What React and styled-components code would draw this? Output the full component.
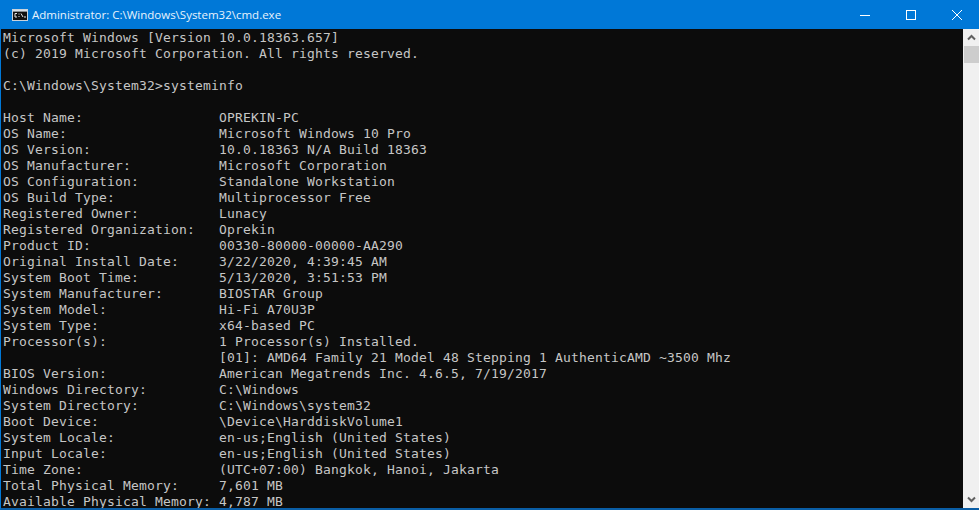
import React from "react";
import styled, { createGlobalStyle } from "styled-components";

const GlobalStyle = createGlobalStyle`
  html, body {
    margin: 0;
    padding: 0;
    height: 100%;
    overflow: hidden;
    background: #0c0c0c;
  }
`;

const Window = styled.div`
  width: 979px;
  height: 510px;
  box-sizing: border-box;
  display: flex;
  flex-direction: column;
  overflow: hidden;
  border-left: 1px solid #0078d7;
  border-bottom: 2px solid #0a5ea6;
  background: #0c0c0c;
`;

const TitleBar = styled.div`
  flex: none;
  height: 29px;
  margin-right: -1px;
  display: flex;
  align-items: center;
  background: #0078d7;
  color: #fff;
`;

const AppIcon = styled.svg`
  flex: none;
  width: 16px;
  height: 12px;
  margin-left: 11px;
  margin-right: 4px;
`;

const Title = styled.div`
  flex: 1;
  font-family: "Open Sans", "Noto Sans", sans-serif;
  font-size: 11.5px;
  white-space: nowrap;
  color: #e8f3fc;
`;

const WinButton = styled.div`
  width: 46px;
  height: 29px;
  display: flex;
  align-items: center;
  justify-content: center;
`;

const Body = styled.div`
  flex: 1;
  min-height: 0;
  display: flex;
`;

const Console = styled.div`
  flex: 1;
  min-width: 0;
  overflow: hidden;
  padding: 1px 0 0 2px;
  background: #0c0c0c;
  color: #c6c6c6;
  font-family: "DejaVu Sans Mono", "Liberation Mono", monospace;
  font-size: 13px;
  letter-spacing: 0.174px;
  line-height: 16px;
`;

const Line = styled.div`
  display: flex;
  height: 16px;
  white-space: pre;
`;

const Label = styled.span`
  flex: none;
  width: 216px;
`;

const Scrollbar = styled.div`
  flex: none;
  width: 16px;
  display: flex;
  flex-direction: column;
  background: #f0f0f0;
`;

const ScrollArrow = styled.div`
  flex: none;
  height: 17px;
  display: flex;
  align-items: center;
  justify-content: center;
`;

const ScrollThumb = styled.div`
  flex: none;
  height: 17px;
  margin-left: 1px;
  background: #cdcdcd;
`;

const ScrollTrack = styled.div`
  flex: 1;
`;

const intro = [
  "Microsoft Windows [Version 10.0.18363.657]",
  "(c) 2019 Microsoft Corporation. All rights reserved.",
  "",
  "C:\\Windows\\System32>systeminfo",
  "",
];

const info = [
  ["Host Name:", "OPREKIN-PC"],
  ["OS Name:", "Microsoft Windows 10 Pro"],
  ["OS Version:", "10.0.18363 N/A Build 18363"],
  ["OS Manufacturer:", "Microsoft Corporation"],
  ["OS Configuration:", "Standalone Workstation"],
  ["OS Build Type:", "Multiprocessor Free"],
  ["Registered Owner:", "Lunacy"],
  ["Registered Organization:", "Oprekin"],
  ["Product ID:", "00330-80000-00000-AA290"],
  ["Original Install Date:", "3/22/2020, 4:39:45 AM"],
  ["System Boot Time:", "5/13/2020, 3:51:53 PM"],
  ["System Manufacturer:", "BIOSTAR Group"],
  ["System Model:", "Hi-Fi A70U3P"],
  ["System Type:", "x64-based PC"],
  ["Processor(s):", "1 Processor(s) Installed."],
  ["", "[01]: AMD64 Family 21 Model 48 Stepping 1 AuthenticAMD ~3500 Mhz"],
  ["BIOS Version:", "American Megatrends Inc. 4.6.5, 7/19/2017"],
  ["Windows Directory:", "C:\\Windows"],
  ["System Directory:", "C:\\Windows\\system32"],
  ["Boot Device:", "\\Device\\HarddiskVolume1"],
  ["System Locale:", "en-us;English (United States)"],
  ["Input Locale:", "en-us;English (United States)"],
  ["Time Zone:", "(UTC+07:00) Bangkok, Hanoi, Jakarta"],
  ["Total Physical Memory:", "7,601 MB"],
  ["Available Physical Memory:", "4,787 MB"],
];

export default function App() {
  return (
    <>
      <GlobalStyle />
      <Window>
        <TitleBar>
          <AppIcon viewBox="0 0 16 12">
            <rect x="0.5" y="0.5" width="15" height="11" fill="#111" stroke="#c9d3dc" />
            <rect x="1" y="1" width="14" height="1.6" fill="#d8dfe6" />
            <path d="M5 4.5H3V8h2M6.5 5h1M6.5 7.5h1M9 4.5l2 3.5M12 8h2" fill="none" stroke="#e6e6e6" strokeWidth="1" />
          </AppIcon>
          <Title>Administrator: C:\Windows\System32\cmd.exe</Title>
          <WinButton>
            <svg width="10" height="10" viewBox="0 0 10 10">
              <path d="M0 5.5h10" stroke="#fff" strokeWidth="1" />
            </svg>
          </WinButton>
          <WinButton>
            <svg width="10" height="10" viewBox="0 0 10 10">
              <rect x="0.5" y="0.5" width="9" height="9" fill="none" stroke="#fff" />
            </svg>
          </WinButton>
          <WinButton>
            <svg width="10" height="10" viewBox="0 0 10 10">
              <path d="M0 0l10 10M10 0L0 10" stroke="#fff" strokeWidth="1" />
            </svg>
          </WinButton>
        </TitleBar>
        <Body>
          <Console>
            {intro.map((text, i) => (
              <Line key={i}>{text}</Line>
            ))}
            {info.map(([label, value], i) => (
              <Line key={i}>
                <Label>{label}</Label>
                {value}
              </Line>
            ))}
          </Console>
          <Scrollbar>
            <ScrollArrow>
              <svg width="9" height="7" viewBox="0 0 9 7">
                <path d="M1 5.5l3.5-3.5L8 5.5" fill="none" stroke="#606060" strokeWidth="2" />
              </svg>
            </ScrollArrow>
            <ScrollThumb />
            <ScrollTrack />
            <ScrollArrow>
              <svg width="9" height="7" viewBox="0 0 9 7">
                <path d="M1 1.5L4.5 5 8 1.5" fill="none" stroke="#606060" strokeWidth="2" />
              </svg>
            </ScrollArrow>
          </Scrollbar>
        </Body>
      </Window>
    </>
  );
}
